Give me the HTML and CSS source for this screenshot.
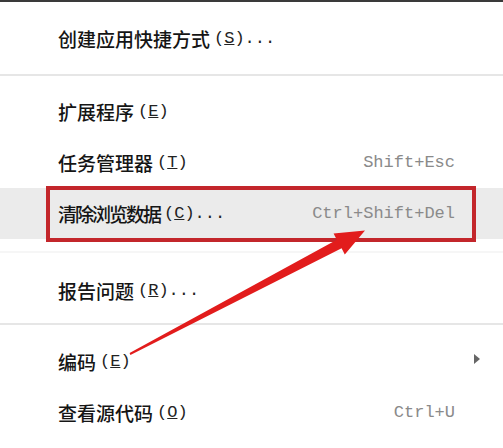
FILE: index.html
```html
<!DOCTYPE html>
<html lang="zh-CN">
<head>
  <meta charset="UTF-8" />
  <title>菜单</title>
  <link rel="stylesheet" href="styles.css">
</head>
<body>
  <div class="menu">
    <div class="item">创建应用快捷方式<span class="key">(<u>S</u>)...</span></div>
    <div class="sep sep-a"></div>
    <div class="item">扩展程序<span class="key">(<u>E</u>)</span></div>
    <div class="item">任务管理器<span class="key">(<u>T</u>)</span><span class="shortcut">Shift+Esc</span></div>
    <div class="item active tight">清除浏览数据<span class="key">(<u>C</u>)...</span><span class="shortcut">Ctrl+Shift+Del</span></div>
    <div class="sep sep-b"></div>
    <div class="item">报告问题<span class="key">(<u>R</u>)...</span></div>
    <div class="sep sep-c"></div>
    <div class="item">编码<span class="key">(<u>E</u>)</span><span class="submenu"></span></div>
    <div class="item">查看源代码<span class="key">(<u>O</u>)</span><span class="shortcut">Ctrl+U</span></div>

    <div class="highlight-box"></div>
    <svg class="arrow" width="503" height="448" viewBox="0 0 503 448">
      <polygon fill="#e21c1c" points="129.6,353.1 336.8,239.8 333.6,233.4 365,230.5 344.8,254.6 341.6,248.2 130.4,354.9" />
    </svg>
  </div>
</body>
</html>
```
FILE: styles.css
```css
html, body {
  margin: 0;
  background: #fff;
  overflow: hidden;
}

.menu {
  position: relative;
  width: 503px;
  height: 448px;
  box-sizing: border-box;
  border-top: 2px solid #3a3a3a;
  padding-top: 11px;
  font-family: "Noto Sans CJK SC", "Liberation Sans", sans-serif;
  color: #151515;
}

.item {
  display: flex;
  align-items: center;
  height: 51px;
  padding-left: 58px;
  padding-right: 23px;
  font-size: 19px;
  font-weight: 500;
  white-space: nowrap;
}

.item.active {
  background: #ebebeb;
}

.item.tight {
  letter-spacing: -2px;
}

.key {
  margin-left: 4px;
  font-family: "Liberation Mono", monospace;
  font-size: 17px;
  font-weight: 400;
  letter-spacing: 0;
  color: #222;
}

.shortcut {
  margin-left: auto;
  margin-right: 25px;
  font-family: "Liberation Mono", monospace;
  font-size: 17px;
  font-weight: 400;
  letter-spacing: 0;
  color: #8a8a8a;
}

.submenu {
  margin-left: auto;
  margin-top: -6px;
  width: 0;
  height: 0;
  border-top: 5px solid transparent;
  border-bottom: 5px solid transparent;
  border-left: 6px solid #666;
}

.sep {
  height: 2px;
  background: #e6e6e6;
}

.sep-a {
  margin: 10px 0;
}

.sep-b {
  margin: 12px 0;
  background: #f6f6f6;
}

.sep-c {
  margin: 7px 0 11px;
}

.highlight-box {
  position: absolute;
  left: 46px;
  top: 184px;
  width: 430px;
  height: 56px;
  box-sizing: border-box;
  border: 4px solid #c3262b;
}

.arrow {
  position: absolute;
  left: 0;
  top: -2px;
}
```
